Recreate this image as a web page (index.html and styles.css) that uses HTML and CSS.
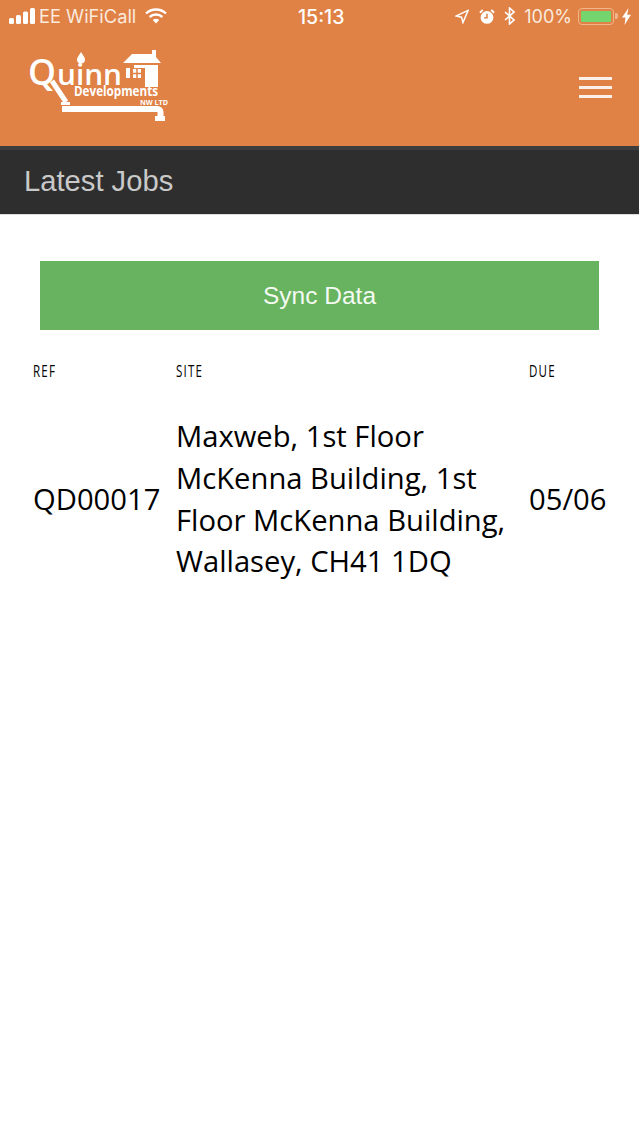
FILE: index.html
```html
<!DOCTYPE html>
<html lang="en">
<head>
    <meta charset="UTF-8">
    <meta name="viewport" content="width=device-width, initial-scale=1.0">
    <title>Latest Jobs</title>
    <link rel="stylesheet" href="styles.css">
</head>
<body>
    <header class="top">
        <div class="status">
            <div class="status-left">
                <svg class="signal" width="26" height="16" viewBox="0 0 26 16">
                    <rect x="0" y="10" width="5" height="6" rx="1.5"/>
                    <rect x="7" y="7" width="5" height="9" rx="1.5"/>
                    <rect x="14" y="3.5" width="5" height="12.5" rx="1.5"/>
                    <rect x="21" y="0" width="5" height="16" rx="1.5"/>
                </svg>
                <span>EE WiFiCall</span>
                <svg class="wifi" width="22" height="16" viewBox="0 0 22 16">
                    <path d="M1 5.5a14.5 14.5 0 0 1 20 0" />
                    <path d="M4.6 9a9.5 9.5 0 0 1 12.8 0" />
                    <path d="M11 15.5l-3.2-3.4a4.6 4.6 0 0 1 6.4 0z" class="wifi-dot"/>
                </svg>
            </div>
            <div class="status-time">15:13</div>
            <div class="status-right">
                <svg class="st-location" width="14" height="15" viewBox="0 0 15 15"><path class="hollow" d="M14 1L1 7l6 1.2L8.5 14z"/></svg>
                <svg class="st-alarm" width="16" height="17" viewBox="0 0 17 17">
                    <circle cx="8.5" cy="9.5" r="6.8" fill="#fff"/>
                    <path class="clock-hand" d="M8.5 5.5v4.2h-3"/>
                    <path d="M1 4.5L4 1.5 M16 4.5L13 1.5" class="bell"/>
                </svg>
                <svg class="st-bluetooth" width="11" height="18" viewBox="0 0 11 18"><path class="hollow" d="M1 5l9 8-4.5 4V1L10 5l-9 8"/></svg>
                <span class="st-percent">100%</span>
                <div class="battery"><div class="battery-fill"></div></div>
                <div class="battery-nub"></div>
                <svg class="st-bolt" width="9" height="17" viewBox="0 0 9 17"><path fill="#fff" d="M6.5 0L0 9.5h3.5L2.5 17 9 6.8H5.2z"/></svg>
            </div>
        </div>
        <div class="brand">
            <svg class="logo" width="142" height="76" viewBox="0 0 142 76">
                <path d="M53 3c2 3.5 4 5.5 4 7.500a4 4 0 0 1-8 0c0-2 2-4 4-7.500z"/>
                <path d="M95 14l9-9h20V1h4v7l5 6z"/>
                <path d="M98 16h32v22h-13V19h-11v-3z M98 19h4v10h-4z"/>
                <path d="M105 20h8v9h-8z"/>
                <path class="window" d="M109 20v9 M105 24.5h8"/>
                <text class="logo-quinn" y="36"><tspan x="0" textLength="28" lengthAdjust="spacingAndGlyphs">Q</tspan><tspan class="logo-uinn" x="29" textLength="65" lengthAdjust="spacingAndGlyphs">uinn</tspan></text>
                <text class="logo-dev" x="46" y="47" textLength="84" lengthAdjust="spacingAndGlyphs">Developments</text>
                <text class="logo-nw" x="112" y="56" textLength="28" lengthAdjust="spacingAndGlyphs">NW LTD</text>
                <path class="handle" d="M24 32l14 21"/>
                <path d="M33 53h9v3h-9z"/>
                <path class="pipe" d="M34 60h95.5a3 3 0 0 1 3 3v6"/>
                <path d="M127 67h10v5h-10z"/>
            </svg>
            <button class="menu-btn" aria-label="Menu">
                <span></span><span></span><span></span>
            </button>
        </div>
    </header>

    <div class="page-title">Latest Jobs</div>

    <main class="content">
        <button class="sync">Sync Data</button>
        <table class="jobs">
            <thead>
                <tr>
                    <th class="col-ref"><span>REF</span></th>
                    <th class="col-site"><span>SITE</span></th>
                    <th class="col-due"><span>DUE</span></th>
                </tr>
            </thead>
            <tbody>
                <tr>
                    <td>QD00017</td>
                    <td>Maxweb, 1st Floor McKenna Building, 1st Floor McKenna Building, Wallasey, CH41 1DQ</td>
                    <td>05/06</td>
                </tr>
            </tbody>
        </table>
    </main>
</body>
</html>
```

FILE: styles.css
```css
* {
    margin: 0;
    padding: 0;
    box-sizing: border-box;
}

body {
    background-color: #fff;
    font-family: 'Open Sans', sans-serif;
    color: #000;
}

.top {
    height: 150px;
    background-color: #e08145;
    border-bottom: 4px solid #3d3d3d;
    color: #fff;
}

.status {
    display: flex;
    justify-content: space-between;
    align-items: center;
    height: 32px;
    padding: 0 8px 0 9px;
    font-family: Inter, 'Liberation Sans', sans-serif;
    font-size: 18.3px;
    position: relative;
}

.status-left,
.status-right {
    display: flex;
    align-items: center;
}

.status-left {
    gap: 4px;
    color: #fbeade;
}

.signal {
    fill: #fff;
}

.wifi {
    margin-left: 5px;
    fill: none;
    stroke: #fff;
    stroke-width: 2.4;
}

.wifi-dot {
    fill: #fff;
    stroke: none;
}

.status-time {
    position: absolute;
    left: 298px;
    top: 5px;
    font-weight: 500;
    font-size: 19.5px;
}

.status-right {
    color: #fbeade;
    font-size: 18px;
}

.st-location {
    margin-right: 10px;
}

.st-alarm,
.st-bluetooth {
    margin-right: 9px;
}

.st-percent {
    margin-right: 6px;
}

.st-bolt {
    margin-left: 4px;
}

.hollow {
    fill: none;
    stroke: #fff;
    stroke-width: 1.6;
}

.clock-hand {
    fill: none;
    stroke: #e08145;
    stroke-width: 1.6;
}

.bell {
    stroke: #fff;
    stroke-width: 2;
}

.battery {
    width: 36px;
    height: 17px;
    padding: 2px;
    border: 1.5px solid #f2b48b;
    border-radius: 4px;
}

.battery-fill {
    height: 100%;
    background-color: #74d56e;
    border-radius: 1px;
}

.battery-nub {
    width: 3px;
    height: 6px;
    margin-left: 1px;
    background-color: #f2b48b;
    border-radius: 0 2px 2px 0;
}

.brand {
    display: flex;
    justify-content: space-between;
    align-items: flex-start;
    padding: 17px 27px 0 28px;
}

.logo {
    fill: #fff;
}

.logo-quinn {
    font-family: 'Open Sans', sans-serif;
    font-size: 36px;
    font-weight: 600;
}

.logo-uinn {
    font-size: 29px;
}

.logo-dev {
    font-family: 'Open Sans', sans-serif;
    font-size: 13.5px;
    font-weight: 700;
}

.logo-nw {
    font-family: 'Open Sans', sans-serif;
    font-size: 6.5px;
    font-weight: 700;
}

.handle {
    stroke: #fff;
    stroke-width: 5;
}

.pipe {
    fill: none;
    stroke: #fff;
    stroke-width: 6;
}

.window {
    stroke: #e08145;
    stroke-width: 1.5;
}

.menu-btn {
    display: flex;
    flex-direction: column;
    gap: 6px;
    width: 33px;
    margin-top: 28px;
    border: none;
    background: none;
}

.menu-btn span {
    display: block;
    height: 3px;
    background-color: #fbf1ea;
}

.page-title {
    height: 65px;
    padding: 13px 24px 0;
    background-color: #2e2e2e;
    border-bottom: 1px solid #ddd;
    color: #c9c9c9;
    font-family: 'Liberation Sans', sans-serif;
    font-size: 29.2px;
    line-height: 36px;
}

.content {
    padding: 46px 33px 0;
}

.sync {
    display: block;
    width: 559px;
    height: 69px;
    margin: 0 0 0 7px;
    border: none;
    background-color: #68b35f;
    color: #f4faf3;
    font-family: 'Liberation Sans', sans-serif;
    font-size: 24.5px;
}

.jobs {
    width: 586px;
    margin-top: 29px;
    border-collapse: collapse;
    table-layout: fixed;
    font-size: 29.2px;
    line-height: 41.8px;
}

.jobs th {
    height: 24px;
    text-align: left;
    font-size: 17px;
    line-height: 24px;
    font-weight: 400;
}

.jobs th span {
    display: inline-block;
    letter-spacing: 1.8px;
    transform: scaleX(0.68);
    transform-origin: left center;
}

.jobs td {
    padding-top: 33px;
    vertical-align: middle;
}

.col-ref {
    width: 143px;
}

.col-site {
    width: 353px;
}

.col-due {
    width: 90px;
}
```
